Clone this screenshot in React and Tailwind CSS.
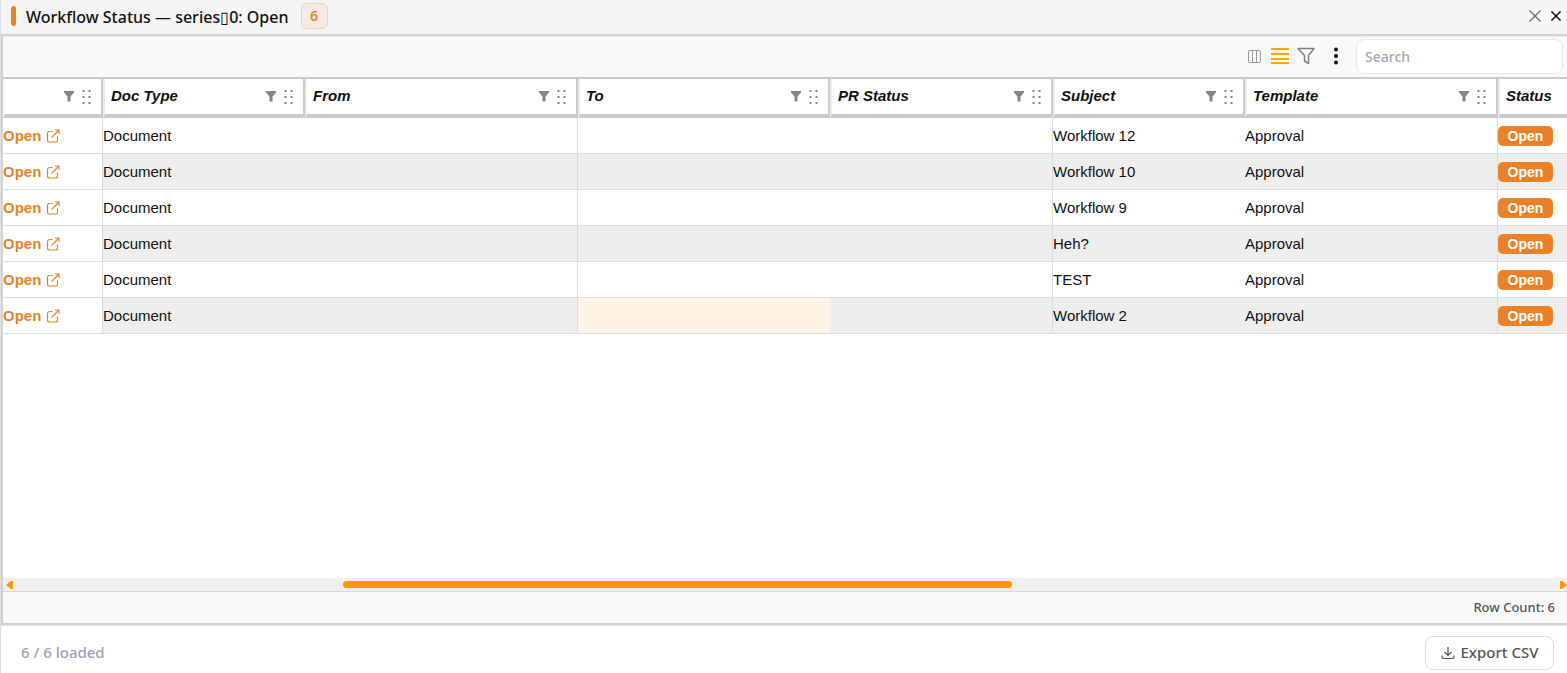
import { useState } from 'react'

const ROWS = [
  { id: 12, subject: 'Workflow 12' },
  { id: 10, subject: 'Workflow 10' },
  { id: 9, subject: 'Workflow 9' },
  { id: 4, subject: 'Heh?' },
  { id: 3, subject: 'TEST' },
  { id: 2, subject: 'Workflow 2' },
]

const COLUMNS = [
  { key: 'link', label: '', width: 'w-[100px]' },
  { key: 'docType', label: 'Doc Type', width: 'w-[202px]' },
  { key: 'from', label: 'From', width: 'w-[273px]' },
  { key: 'to', label: 'To', width: 'w-[252px]' },
  { key: 'prStatus', label: 'PR Status', width: 'w-[223px]' },
  { key: 'subject', label: 'Subject', width: 'w-[192px]' },
  { key: 'template', label: 'Template', width: 'w-[253px]' },
  { key: 'status', label: 'Status', width: '' },
]

function CloseIcon({ className, strokeWidth }) {
  return (
    <svg viewBox="0 0 12 12" className={className} fill="none" stroke="currentColor" strokeWidth={strokeWidth}>
      <path d="M0.5 0.5l11 11M11.5 0.5l-11 11" />
    </svg>
  )
}

function ColumnsIcon() {
  return (
    <svg viewBox="0 0 13 13" className="size-[13px]" fill="none" stroke="#9a9a9a">
      <rect x="0.5" y="0.5" width="12" height="12" rx="1.5" />
      <path d="M4.5 0.5v12M8.5 0.5v12" />
    </svg>
  )
}

function LinesIcon() {
  return (
    <svg viewBox="0 0 18 18" className="size-[18px]" fill="#ffa500">
      <path d="M0 1h18v2H0zM0 6h18v2H0zM0 11h18v2H0zM0 15h18v2H0z" />
    </svg>
  )
}

function FilterIcon() {
  return (
    <svg viewBox="0 0 18 18" className="size-[18px]" fill="none" stroke="#808080" strokeWidth="1.5">
      <path d="M1 1.5h16l-5.500 7v8l-4-2.500v-5.500z" strokeLinejoin="round" />
    </svg>
  )
}

function MoreIcon() {
  return (
    <svg viewBox="0 0 4 18" className="h-[18px] w-1" fill="#111">
      <circle cx="2" cy="2.500" r="2" />
      <circle cx="2" cy="9" r="2" />
      <circle cx="2" cy="15.500" r="2" />
    </svg>
  )
}

function FunnelIcon() {
  return (
    <svg viewBox="0 0 10 11" className="h-[11px] w-[10px]" fill="#858585">
      <path d="M0 0h10v1.500L6.500 5.500v5h-3v-5L0 1.500z" />
    </svg>
  )
}

function GripIcon() {
  return (
    <svg viewBox="0 0 9 14" className="h-[14px] w-[9px]" fill="#858585">
      {[1, 7, 13].map((y) => (
        <path key={y} d={`M0.500 ${y - 1}h2v2h-2zM6.500 ${y - 1}h2v2h-2z`} />
      ))}
    </svg>
  )
}

function ExternalIcon() {
  return (
    <svg viewBox="0 0 14 14" className="size-[14px]" fill="none" stroke="currentColor" strokeWidth="1.2">
      <path d="M6.500 2.500H3.500a2 2 0 0 0-2 2V11a2 2 0 0 0 2 2h6a2 2 0 0 0 2-2V7.500" />
      <path d="M9 1H13v4M13 1L5.500 8.500" />
    </svg>
  )
}

function DownloadIcon() {
  return (
    <svg viewBox="0 0 14 14" className="size-[14px]" fill="none" stroke="currentColor" strokeWidth="1.2">
      <path d="M7 1v8.500M3.500 6L7 9.500 10.500 6" />
      <path d="M1 9.500V11a1.500 1.500 0 0 0 1.500 1.500h9A1.500 1.500 0 0 0 13 11V9.500" />
    </svg>
  )
}

function HeaderCell({ column }) {
  return (
    <th scope="col" className="border-r-2 border-b-4 border-l-2 border-r-[#cacaca] border-b-[#cacaca] border-l-[#ececec] bg-white p-0 first:border-l-[#f8f8f8] last:border-r-0">
      <div className="flex h-[35px] items-center gap-2 pr-[10px] pl-[6px]">
        <span className="flex-1 pb-[2px] text-left text-[15px] leading-5 font-bold whitespace-nowrap italic">{column.label}</span>
        {column.key !== 'status' && (
          <>
            <button type="button" aria-label={`Filter ${column.label}`}><FunnelIcon /></button>
            <button type="button" aria-label={`Move ${column.label}`}><GripIcon /></button>
          </>
        )}
      </div>
    </th>
  )
}

function Row({ row, selected }) {
  const cell = 'h-9 border-b border-[#dcdcdc] p-0'
  return (
    <tr className="bg-white even:bg-[#eeeeee]">
      <td className={`${cell} border-r bg-white`}>
        <a href="#open" className="flex items-center gap-[5px] font-bold text-[#ea8126]">
          Open <ExternalIcon />
        </a>
      </td>
      <td className={cell}>Document</td>
      <td className={`${cell} border-r`}></td>
      <td className={selected ? `${cell} bg-[#fff3e5]` : cell}></td>
      <td className={`${cell} border-r`}></td>
      <td className={cell}>{row.subject}</td>
      <td className={`${cell} border-r`}>Approval</td>
      <td className={cell}>
        <span className="flex h-5 w-[55px] items-center justify-center rounded-[5px] bg-[#ea8126] text-sm leading-5 font-bold text-white">Open</span>
      </td>
    </tr>
  )
}

export default function App() {
  const [search, setSearch] = useState('')
  const rows = ROWS.filter((r) => r.subject.toLowerCase().includes(search.toLowerCase()))

  return (
    <div className="flex h-screen flex-col overflow-hidden border-l border-[#dedede] bg-white font-['Noto_Sans',sans-serif] text-[#111]">
      {/* Title bar */}
      <header className="flex h-[34px] shrink-0 items-center bg-[#f5f5f5] pr-[6px] pb-[2px] pl-[10px]">
        <span className="h-5 w-[5px] rounded-full bg-[#ea8126]"></span>
        <h1 className="ml-[10px] pt-[2px] text-base leading-5 font-medium whitespace-nowrap">Workflow Status — series▯0: Open</h1>
        <span className="ml-3 flex h-[26px] w-[27px] items-center justify-center rounded-md border border-[#f3cfb0] bg-[#f5ebe4] text-sm font-semibold text-[#ea8126]">6</span>
        <div className="ml-auto flex items-center gap-[10px]">
          <button type="button" aria-label="Close panel" className="text-[#666]"><CloseIcon className="size-3" strokeWidth="1.2" /></button>
          <button type="button" aria-label="Close"><CloseIcon className="size-[10px]" strokeWidth="1.800" /></button>
        </div>
      </header>

      <main className="flex min-h-0 flex-1 flex-col border-y-2 border-l-2 border-[#d0d0d0]">
        {/* Toolbar */}
        <div className="flex h-[41px] shrink-0 items-center justify-end border-t border-[#ececec] bg-[#f9f9f9] pr-1 pb-[2px]">
          <button type="button" aria-label="Columns"><ColumnsIcon /></button>
          <button type="button" aria-label="Row height" className="ml-[10px]"><LinesIcon /></button>
          <button type="button" aria-label="Filters" className="ml-2"><FilterIcon /></button>
          <button type="button" aria-label="More" className="ml-[19px]"><MoreIcon /></button>
          <input
            type="text"
            aria-label="Search"
            placeholder="Search"
            value={search}
            onChange={(e) => setSearch(e.target.value)}
            className="ml-[18px] h-[35px] w-[207px] rounded-lg border border-[#e2e8f0] bg-white px-2 text-sm font-medium outline-none placeholder:text-[#a0a6b4]"
          />
        </div>

        {/* Grid */}
        <div className="min-h-0 flex-1 overflow-hidden border-t-2 border-[#cacaca]">
          <table className="w-full table-fixed border-separate border-spacing-0 font-['Liberation_Sans',sans-serif] text-[15px] leading-5">
            <colgroup>
              {COLUMNS.map((c) => <col key={c.key} className={c.width} />)}
            </colgroup>
            <thead>
              <tr>
                {COLUMNS.map((c) => <HeaderCell key={c.key} column={c} />)}
              </tr>
            </thead>
            <tbody>
              {rows.map((r) => <Row key={r.id} row={r} selected={r.id === 2} />)}
            </tbody>
          </table>
        </div>

        {/* Horizontal scrollbar */}
        <div className="flex h-[13px] shrink-0 items-center justify-between bg-[#efefef] pl-[3px]">
          <button type="button" aria-label="Scroll left">
            <svg viewBox="0 0 7 8" className="h-2 w-[7px]" fill="#ff9800"><path d="M7 0v8H5L0 4l5-4z" /></svg>
          </button>
          <div className="flex-1">
            <div className="ml-[21.300%] h-[7px] w-[43.300%] rounded-full bg-[#ff9800]"></div>
          </div>
          <button type="button" aria-label="Scroll right">
            <svg viewBox="0 0 7 8" className="h-2 w-[7px]" fill="#ff9800"><path d="M0 0v8h2l5-4-5-4z" /></svg>
          </button>
        </div>
        <div className="flex h-8 shrink-0 items-center justify-end border-t border-[#d8d8d8] bg-[#f9f9f9] pr-3 text-[13px] font-medium text-[#555]">
          Row Count: {rows.length}
        </div>
      </main>

      {/* Footer */}
      <footer className="flex h-12 shrink-0 items-center justify-between border-t border-[#e4e4e4] pt-[6px] pr-[13px] pl-5">
        <span className="text-[15px] font-medium text-[#a0a0b4]">{rows.length} / {ROWS.length} loaded</span>
        <button type="button" className="flex h-[34px] w-[129px] items-center justify-center gap-[6px] rounded-lg border border-[#dcdcdc] bg-white text-[15px] font-medium whitespace-nowrap text-[#555]">
          <DownloadIcon /> Export CSV
        </button>
      </footer>
    </div>
  )
}
